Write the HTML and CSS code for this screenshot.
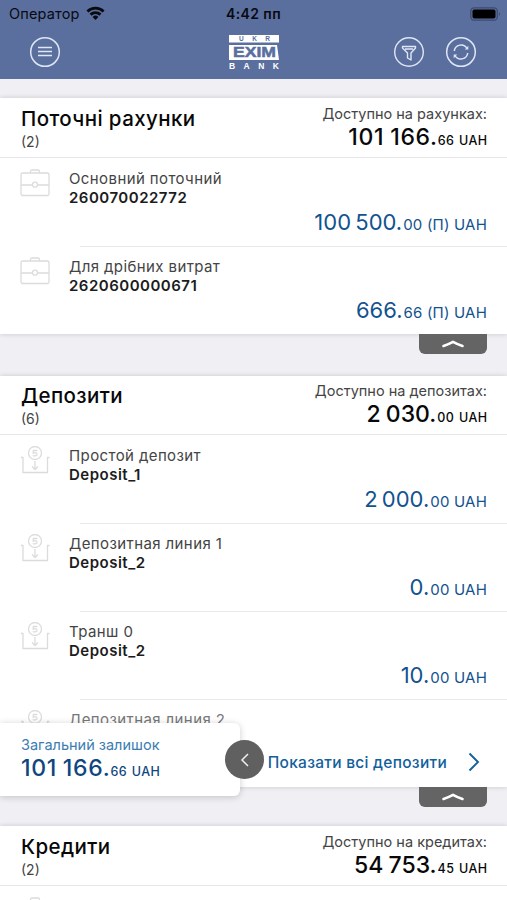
FILE: index.html
```html
<!DOCTYPE html>
<html lang="uk">
<head>
<meta charset="utf-8">
<title>Рахунки</title>
<link rel="stylesheet" href="styles.css">
</head>
<body>
<svg class="defs" aria-hidden="true">
  <symbol id="case" viewBox="0 0 30 28"><g fill="none" stroke="#dcdcdc" stroke-width="1.3"><rect x="1" y="4" width="28" height="22.5" rx="1.5"/><path d="M10.500 4V2.500Q10.500 1 12 1h6q1.500 0 1.500 1.500V4M1 16h11.500M17.500 16H29"/><circle cx="15" cy="15.700" r="2.500"/></g></symbol>
  <symbol id="deposit" viewBox="0 0 30 28"><g fill="none" stroke="#dcdcdc" stroke-width="1.300"><path d="M1 11.500h2V26.500h24.500V11.500h2M15 15v8.500M12 20.500l3 3 3-3"/><circle cx="15" cy="7" r="6.500"/><path d="M17.300 4.500h-3.800l-.4 2.500q3.800-.8 3.800 1.300t-4.200 1.300"/></g></symbol>
  <symbol id="up" viewBox="0 0 22 8"><path d="M1.500 6Q6 4.500 11 1.800q5 2.700 9.500 4.200" fill="none" stroke="#fff" stroke-width="2.500" stroke-linecap="round"/></symbol>
</svg>
<div class="screen">
  <header class="top">
    <div class="status">
      <div class="carrier"><span>Оператор</span>
        <svg class="wifi" viewBox="0 0 20 15"><g fill="none" stroke="#080a10" stroke-width="3"><path d="M1.500 5.300a12.300 12.300 0 0 1 17 0"/><path d="M4.800 8.700a7.600 7.600 0 0 1 10.400 0"/></g><path d="M6.900 11.100a4.500 4.500 0 0 1 6.200 0L10 14.300z" fill="#080a10"/></svg>
      </div>
      <div class="clock">4:42 пп</div>
      <svg class="battery" viewBox="0 0 32 14"><rect x=".8" y=".8" width="26.500" height="12.400" rx="3.500" fill="none" stroke="#3d4b70" stroke-width="1.300"/><rect x="2.500" y="2.500" width="23" height="9" rx="1.800" fill="#000"/><path d="M29 5q2 2 0 4z" fill="#3d4b70"/></svg>
    </div>
    <div class="bar">
      <svg class="round" viewBox="0 0 32 32"><g fill="none" stroke="#dfe6f5" stroke-width="1.500"><circle cx="16" cy="16" r="14.300"/><path d="M9 11.500h14M9 15.500h14M9 19.500h14"/></g></svg>
      <svg class="logo" viewBox="0 0 50 35"><path d="M0 0h50v7.500H0zM0 10h48l2 15H0z" fill="#fff"/><g font-family="Liberation Sans" font-weight="700"><text x="10" y="6.100" font-size="6.500" textLength="31" fill="#5b6f9e">UKR</text><text x="4" y="22.300" font-size="14.500" textLength="43" lengthAdjust="spacingAndGlyphs" fill="#5b6f9e" stroke="#5b6f9e" stroke-width=".5">EXIM</text><text x="0" y="34" font-size="8.500" textLength="50" fill="#fff">BANK</text></g></svg>
      <div class="actions">
        <svg class="round" viewBox="0 0 32 32"><g fill="none" stroke="#dfe6f5" stroke-width="1.400" stroke-linejoin="round"><circle cx="16" cy="16" r="14.300"/><path d="M9.500 10.500h13v1.500l-4.500 5V24l-3.500-2v-5l-5-5zM12 13h8"/></g></svg>
        <svg class="round" viewBox="0 0 32 32"><g fill="none" stroke="#dfe6f5" stroke-width="1.500"><circle cx="16" cy="16" r="14.300"/><path d="M9.300 15a6.800 6.800 0 0 1 12.700-2.500M22.700 17a6.800 6.800 0 0 1-12.700 2.500"/></g><path d="M19.800 13.500h3.500v-3.800zM12.200 18.500H8.700v3.800z" fill="#dfe6f5"/></svg>
      </div>
    </div>
  </header>

  <section class="card">
    <div class="head"><div><h2>Поточні рахунки</h2><p class="count">(2)</p></div><div class="total"><p>Доступно на рахунках:</p><b class="wide">101 166.<small>66 <i>UAH</i></small></b></div></div>
    <div class="row"><svg class="ico"><use href="#case"/></svg><div class="body"><p class="name">Основний поточний</p><p class="num">260070022772</p><p class="sum">100 500.<small>00 (П) UAH</small></p></div></div>
    <div class="row"><svg class="ico"><use href="#case"/></svg><div class="body"><p class="name">Для дрібних витрат</p><p class="num">2620600000671</p><p class="sum">666.<small>66 (П) UAH</small></p></div></div>
    <div class="tab"><svg><use href="#up"/></svg></div>
  </section>

  <section class="card second">
    <div class="head"><div><h2>Депозити</h2><p class="count">(6)</p></div><div class="total"><p>Доступно на депозитах:</p><b>2 030.<small>00 <i>UAH</i></small></b></div></div>
    <div class="row"><svg class="ico"><use href="#deposit"/></svg><div class="body"><p class="name">Простой депозит</p><p class="num">Deposit_1</p><p class="sum">2 000.<small>00 UAH</small></p></div></div>
    <div class="row"><svg class="ico"><use href="#deposit"/></svg><div class="body"><p class="name">Депозитная линия 1</p><p class="num">Deposit_2</p><p class="sum">0.<small>00 UAH</small></p></div></div>
    <div class="row"><svg class="ico"><use href="#deposit"/></svg><div class="body"><p class="name">Транш 0</p><p class="num">Deposit_2</p><p class="sum">10.<small>00 UAH</small></p></div></div>
    <div class="row faded"><svg class="ico"><use href="#deposit"/></svg><div class="body"><p class="name">Депозитная линия 2</p></div></div>
    <div class="more"><span>Показати всі депозити</span><svg viewBox="0 0 12 20"><path d="M1.500 1.500L10 10l-8.500 8.500" fill="none" stroke="#12609c" stroke-width="1.900"/></svg></div>
    <div class="tab"><svg><use href="#up"/></svg></div>
  </section>

  <section class="card third">
    <div class="head"><div><h2>Кредити</h2><p class="count">(2)</p></div><div class="total"><p>Доступно на кредитах:</p><b>54 753.<small>45 <i>UAH</i></small></b></div></div>
    <div class="row"><svg class="ico"><use href="#case"/></svg></div>
  </section>

  <aside class="balance"><p>Загальний залишок</p><b class="wide">101 166.<small>66 <i>UAH</i></small></b>
    <div class="knob"><svg viewBox="0 0 10 14"><path d="M8 1L2 7l6 6" fill="none" stroke="#eee" stroke-width="1.500"/></svg></div>
  </aside>
</div>
</body>
</html>
```

FILE: styles.css
```css
* { box-sizing: border-box; margin: 0; padding: 0; }
body { font-family: Inter, "Noto Sans", sans-serif; background: #f0eff4; color: #111; }
.defs { position: absolute; width: 0; height: 0; }
.screen { position: relative; width: 507px; height: 900px; overflow: hidden; }
p, h2, b, span { white-space: nowrap; }

.top { height: 79px; background: #5b6f9e; }
.status { display: grid; grid-template-columns: 1fr auto 1fr; align-items: center; height: 27px; padding: 0 5px 0 9px; color: #080a10; }
.carrier { display: flex; align-items: center; gap: 6px; font-size: 14.5px; letter-spacing: .15px; }
.wifi { width: 19px; height: 15px; }
.clock { margin-right: 4px; font-size: 14px; font-weight: 600; letter-spacing: .4px; }
.battery { width: 32px; height: 14px; justify-self: end; }
.bar { display: grid; grid-template-columns: 1fr 50px 1fr; align-items: center; height: 50px; padding: 0 30px 0 29px; }
.round { display: block; width: 32px; height: 32px; }
.logo { width: 50px; height: 35px; margin-left: 1px; }
.actions { display: flex; gap: 20px; justify-content: flex-end; }

.card { position: relative; margin-top: 19px; background: #fff; box-shadow: 0 0 5px rgba(0, 0, 0, .17); }
.second { margin-top: 42px; }
.third { margin-top: 39px; }
.head { display: flex; justify-content: space-between; height: 60px; padding: 7px 20px 0 21px; border-bottom: 1px solid #e7e7e9; }
.second .head { height: 59px; padding-top: 6px; }
h2 { font-size: 20.5px; font-weight: 500; line-height: 27px; letter-spacing: .4px; color: #080808; }
.count { font-size: 14px; line-height: 20px; color: #444; }
.total { text-align: right; }
.total p { font-size: 14.5px; line-height: 18px; color: #444; }
b { display: block; font-size: 23px; font-weight: 500; line-height: 29px; word-spacing: -1px; color: #080808; }
b.wide { letter-spacing: .7px; }
b small { margin-left: 1px; font-size: 12.5px; letter-spacing: .4px; word-spacing: 1px; }
b.wide small { margin-left: 0; letter-spacing: .4px; }
b i { margin-right: -.4px; font-style: normal; }
.row { display: flex; height: 88px; padding: 11px 0 0 20px; }
.row + .row { background: linear-gradient(#e9e9eb, #e9e9eb) 80px 0 / 427px 1px no-repeat; }
.ico { flex: none; width: 30px; height: 28px; margin-right: 19px; }
.body { flex: 1; padding-right: 20px; }
.name { font-size: 15px; line-height: 19px; letter-spacing: .4px; color: #444; }
.num { font-size: 15px; font-weight: 600; line-height: 20px; letter-spacing: .5px; color: #1c1c1c; }
.sum { margin-top: 2px; text-align: right; font-size: 22px; line-height: 25px; word-spacing: -2px; color: #12528e; }
.sum small { margin-left: 1px; font-size: 15px; letter-spacing: .2px; word-spacing: 0; }
.faded { height: 38px; overflow: hidden; }
.faded .name { color: #777; }
.more { display: flex; justify-content: flex-end; align-items: center; gap: 21px; height: 50px; padding: 0 27px 0 0; font-size: 15.5px; font-weight: 500; letter-spacing: .27px; color: #12609c; }
.more svg { width: 12px; height: 20px; }
.tab { position: absolute; right: 20px; top: 100%; display: flex; justify-content: center; width: 68px; height: 20px; padding-top: 6px; background: #646464; border-radius: 0 0 6px 6px; }
.tab svg { width: 22px; height: 8px; }

.balance { position: absolute; left: 0; top: 723px; width: 240px; height: 73px; padding: 12px 0 0 21px; background: #fff; border-radius: 0 6px 6px 0; box-shadow: 0 1px 7px rgba(0, 0, 0, .2); }
.balance p { font-size: 14.5px; line-height: 20px; color: #3b7db2; }
.balance b { line-height: 27px; color: #0f4680; }
.knob { position: absolute; left: 225px; top: 17px; display: grid; place-items: center; width: 39px; height: 39px; border-radius: 50%; background: #606060; }
.knob svg { width: 10px; height: 14px; }
```
